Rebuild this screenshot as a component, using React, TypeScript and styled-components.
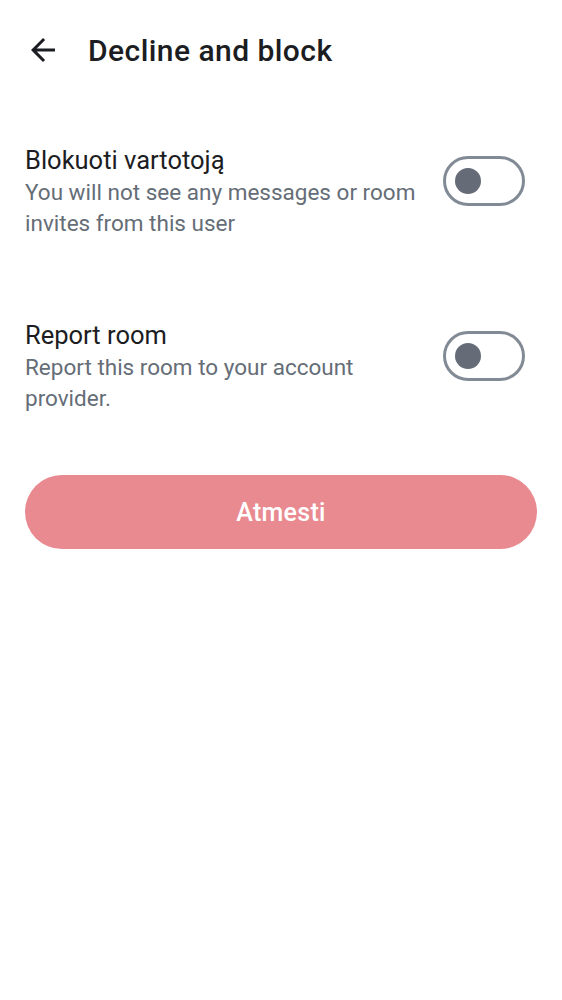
import React, { useState } from "react";
import styled, { createGlobalStyle } from "styled-components";

const GlobalStyle = createGlobalStyle`
  body {
    margin: 0;
    background: #ffffff;
    font-family: Roboto, "Noto Sans", sans-serif;
  }
`;

const StyledPage = styled.div`
  display: flex;
  flex-direction: column;
  padding: 0 25px;
`;

const StyledTopBar = styled.div`
  display: flex;
  align-items: center;
  height: 100px;
  gap: 27px;
`;

const StyledBackButton = styled.button`
  display: flex;
  align-items: center;
  justify-content: center;
  width: 36px;
  height: 36px;
  padding: 0;
  border: none;
  background: none;
  color: #1b1d22;
  cursor: pointer;
`;

const StyledTitle = styled.h1`
  margin: 0;
  font-size: 30px;
  font-weight: 500;
  letter-spacing: 0.45px;
  color: #1b1d22;
`;

const StyledOptions = styled.div`
  display: flex;
  flex-direction: column;
  gap: 79px;
  padding-top: 43px;
`;

const StyledOption = styled.div`
  display: flex;
  align-items: flex-start;
  gap: 20px;
`;

const StyledOptionText = styled.div`
  display: flex;
  flex: 1;
  flex-direction: column;
`;

const StyledOptionTitle = styled.div`
  font-size: 25.5px;
  line-height: 34px;
  color: #1b1d22;
`;

const StyledOptionSubtitle = styled.div`
  font-size: 22.5px;
  line-height: 31px;
  color: #656d77;
`;

const StyledSwitch = styled.button<{ $on: boolean }>`
  position: relative;
  flex-shrink: 0;
  width: 82px;
  height: 50px;
  margin-top: 13px;
  margin-right: 12px;
  padding: 0;
  border: 3px solid ${(p) => (p.$on ? "#0f7a55" : "#818a95")};
  border-radius: 25px;
  background: ${(p) => (p.$on ? "#0f7a55" : "#ffffff")};
  box-sizing: border-box;
  cursor: pointer;
`;

const StyledKnob = styled.span<{ $on: boolean }>`
  position: absolute;
  top: 50%;
  left: ${(p) => (p.$on ? "40px" : "9px")};
  width: 26px;
  height: 26px;
  margin-top: -13px;
  border-radius: 50%;
  background: ${(p) => (p.$on ? "#ffffff" : "#656c77")};
`;

const StyledDeclineButton = styled.button`
  height: 74px;
  margin-top: 61px;
  border: none;
  border-radius: 37px;
  background: #e98a91;
  color: #ffffff;
  font-family: Roboto, "Noto Sans", sans-serif;
  font-size: 25px;
  font-weight: 500;
  letter-spacing: 0.3px;
  cursor: pointer;
`;

function Toggle() {
  const [on, setOn] = useState(false);
  return (
    <StyledSwitch $on={on} onClick={() => setOn(!on)}>
      <StyledKnob $on={on} />
    </StyledSwitch>
  );
}

export default function App() {
  return (
    <>
      <GlobalStyle />
      <StyledPage>
        <StyledTopBar>
          <StyledBackButton aria-label="Back">
            <svg width="36" height="36" viewBox="0 0 24 24" fill="currentColor">
              <path d="M20 11H7.83l5.59-5.59L12 4l-8 8 8 8 1.41-1.41L7.83 13H20v-2z" />
            </svg>
          </StyledBackButton>
          <StyledTitle>Decline and block</StyledTitle>
        </StyledTopBar>
        <StyledOptions>
          <StyledOption>
            <StyledOptionText>
              <StyledOptionTitle>Blokuoti vartotoją</StyledOptionTitle>
              <StyledOptionSubtitle>
                You will not see any messages or room invites from this user
              </StyledOptionSubtitle>
            </StyledOptionText>
            <Toggle />
          </StyledOption>
          <StyledOption>
            <StyledOptionText>
              <StyledOptionTitle>Report room</StyledOptionTitle>
              <StyledOptionSubtitle>
                Report this room to your account provider.
              </StyledOptionSubtitle>
            </StyledOptionText>
            <Toggle />
          </StyledOption>
        </StyledOptions>
        <StyledDeclineButton>Atmesti</StyledDeclineButton>
      </StyledPage>
    </>
  );
}
